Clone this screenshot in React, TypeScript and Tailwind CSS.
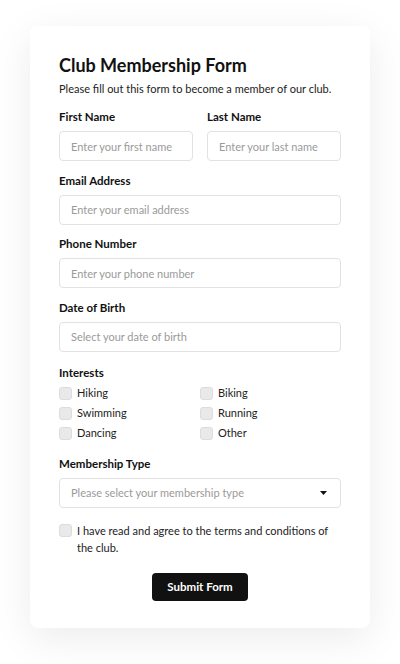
const INTERESTS = ["Hiking", "Biking", "Swimming", "Running", "Dancing", "Other"];

function Field({ label, placeholder }: { label: string; placeholder: string }) {
  return (
    <div className="flex flex-col">
      <label className="mb-1.5 text-[11.5px] font-bold leading-4 text-[#111]">{label}</label>
      <input
        placeholder={placeholder}
        className="h-[30px] w-full rounded-[4px] border border-[#e2e2e2] bg-white px-[11px] text-[11px] text-[#333] outline-none placeholder:text-[#9a9a9a]"
      />
    </div>
  );
}

function Box() {
  return <span className="h-[13px] w-[13px] shrink-0 rounded-[3px] border border-[#dcdcdc] bg-[#e9e9e9]" />;
}

export default function App() {
  return (
    <div className="min-h-screen bg-white pt-[26px]" style={{ fontFamily: "Lato, sans-serif" }}>
      <div className="mx-auto w-[340px] rounded-lg bg-white px-[29px] pt-[27px] pb-[27px] shadow-[0_10px_40px_rgba(0,0,0,0.08)]">
        <h1 className="text-[18px] font-bold leading-6 text-[#111]">Club Membership Form</h1>
        <p className="mt-1 text-[11px] leading-4 text-[#222]">Please fill out this form to become a member of our club.</p>

        <div className="mt-3 flex flex-col gap-[11.5px]">
          <div className="grid grid-cols-2 gap-[14px]">
            <Field label="First Name" placeholder="Enter your first name" />
            <Field label="Last Name" placeholder="Enter your last name" />
          </div>
          <Field label="Email Address" placeholder="Enter your email address" />
          <Field label="Phone Number" placeholder="Enter your phone number" />
          <Field label="Date of Birth" placeholder="Select your date of birth" />
        </div>

        <div className="mt-[13.5px]">
          <div className="text-[11.5px] font-bold leading-4 text-[#111]">Interests</div>
          <div className="mt-[2px] grid grid-cols-2">
            {INTERESTS.map((i) => (
              <div key={i} className="flex h-5 items-center gap-[5px]">
                <Box />
                <span className="text-[11px] text-[#222]">{i}</span>
              </div>
            ))}
          </div>
        </div>

        <div className="mt-[13px] flex flex-col">
          <div className="mb-1.5 text-[11.5px] font-bold leading-4 text-[#111]">Membership Type</div>
          <div className="flex h-[30px] items-center justify-between rounded-[4px] border border-[#e2e2e2] bg-white pl-[11px] pr-[13px]">
            <span className="text-[11px] text-[#9a9a9a]">Please select your membership type</span>
            <svg width="7" height="4" viewBox="0 0 7 4">
              <path d="M0 0h7L3.5 4z" fill="#111" />
            </svg>
          </div>
        </div>

        <div className="mt-[13.5px] flex gap-[5px]">
          <div className="flex h-[17px] items-center">
            <Box />
          </div>
          <p className="text-[11px] leading-[17px] text-[#222]">
            I have read and agree to the terms and conditions of the club.
          </p>
        </div>

        <div className="mt-[17.5px] flex justify-center">
          <button className="h-7 w-24 rounded-[4px] bg-[#111] text-[11.5px] font-bold text-white">Submit Form</button>
        </div>
      </div>
    </div>
  );
}
